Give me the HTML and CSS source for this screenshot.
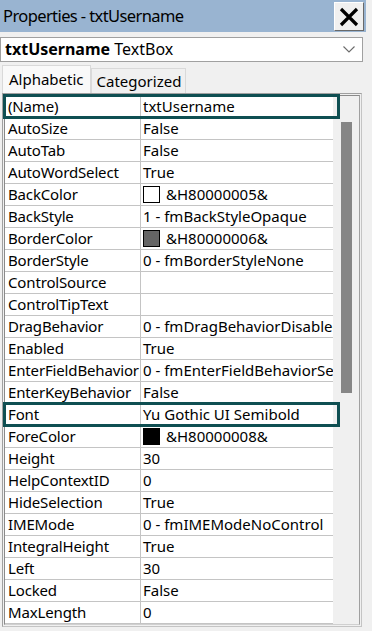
FILE: index.html
```html
<!DOCTYPE html>
<html>
<head>
<meta charset="utf-8">
<link rel="stylesheet" href="styles.css">
</head>
<body>
<div class="window">
  <div class="titlebar">
    <span class="title">Properties - txtUsername</span>
    <div class="close">
      <svg width="20" height="20" viewBox="0 0 20 20"><path d="M2 2 L18 18 M18 2 L2 18" stroke="#000" stroke-width="3.2" fill="none"/></svg>
    </div>
  </div>
  <div class="objsel">
    <span class="objname"><b>txtUsername</b> TextBox</span>
    <svg class="chev" width="12" height="7" viewBox="0 0 12 7"><path d="M0.5 0.5 L6 6 L11.5 0.5" stroke="#6b6b6b" stroke-width="1.1" fill="none"/></svg>
  </div>
  <div class="tabs">
    <div class="tab active">Alphabetic</div>
    <div class="tab">Categorized</div>
  </div>
  <div class="grid">
    <div class="grid-inner">
      <div class="rows">
        <div class="row"><div class="name">(Name)</div><div class="val">txtUsername</div><div class="hl"></div></div>
        <div class="row"><div class="name">AutoSize</div><div class="val">False</div></div>
        <div class="row"><div class="name">AutoTab</div><div class="val">False</div></div>
        <div class="row"><div class="name">AutoWordSelect</div><div class="val">True</div></div>
        <div class="row"><div class="name">BackColor</div><div class="val"><span class="sw sw-white"></span>&amp;H80000005&amp;</div></div>
        <div class="row"><div class="name">BackStyle</div><div class="val">1 - fmBackStyleOpaque</div></div>
        <div class="row"><div class="name">BorderColor</div><div class="val"><span class="sw sw-gray"></span>&amp;H80000006&amp;</div></div>
        <div class="row"><div class="name">BorderStyle</div><div class="val">0 - fmBorderStyleNone</div></div>
        <div class="row"><div class="name">ControlSource</div><div class="val"></div></div>
        <div class="row"><div class="name">ControlTipText</div><div class="val"></div></div>
        <div class="row"><div class="name">DragBehavior</div><div class="val">0 - fmDragBehaviorDisabled</div></div>
        <div class="row"><div class="name">Enabled</div><div class="val">True</div></div>
        <div class="row"><div class="name">EnterFieldBehavior</div><div class="val">0 - fmEnterFieldBehaviorSelectAll</div></div>
        <div class="row"><div class="name">EnterKeyBehavior</div><div class="val">False</div></div>
        <div class="row"><div class="name">Font</div><div class="val">Yu Gothic UI Semibold</div><div class="hl"></div></div>
        <div class="row"><div class="name">ForeColor</div><div class="val"><span class="sw sw-black"></span>&amp;H80000008&amp;</div></div>
        <div class="row"><div class="name">Height</div><div class="val">30</div></div>
        <div class="row"><div class="name">HelpContextID</div><div class="val">0</div></div>
        <div class="row"><div class="name">HideSelection</div><div class="val">True</div></div>
        <div class="row"><div class="name">IMEMode</div><div class="val">0 - fmIMEModeNoControl</div></div>
        <div class="row"><div class="name">IntegralHeight</div><div class="val">True</div></div>
        <div class="row"><div class="name">Left</div><div class="val">30</div></div>
        <div class="row"><div class="name">Locked</div><div class="val">False</div></div>
        <div class="row"><div class="name">MaxLength</div><div class="val">0</div></div>
      </div>
      <div class="scrollbar"><div class="thumb"></div></div>
    </div>
  </div>
</div>
</body>
</html>
```
FILE: styles.css
```css
html, body {
  margin: 0;
  padding: 0;
  background: #f0f0f0;
}
body {
  font-family: "Noto Sans", "Open Sans", sans-serif;
  color: #000;
  width: 372px;
  height: 631px;
  overflow: hidden;
}
.titlebar {
  height: 32px;
  margin-right: 6px;
  background: #99b4d1;
  display: flex;
  align-items: center;
  padding-left: 3px;
}
.title {
  font-size: 16.5px;
  letter-spacing: -0.6px;
  line-height: 32px;
}
.close {
  margin-left: auto;
  margin-right: 2px;
  width: 30px;
  height: 29px;
  box-sizing: border-box;
  background: #f0f0f0;
  border: 1px solid #ffffff;
  border-right-color: #696969;
  border-bottom-color: #696969;
  display: flex;
  align-items: center;
  justify-content: center;
  margin-top: 1px;
}
.objsel {
  margin-top: 5px;
  width: 363px;
  height: 25px;
  box-sizing: border-box;
  background: #fff;
  border: 1px solid #a0a0a0;
  display: flex;
  align-items: center;
  padding-left: 4px;
  padding-right: 7px;
}
.objname {
  font-size: 16px;
  line-height: 23px;
}
.chev {
  margin-left: auto;
}
.tabs {
  margin-top: 3px;
  height: 28px;
  display: flex;
  align-items: flex-end;
  padding-left: 2px;
}
.tab {
  box-sizing: border-box;
  font-size: 15px;
  border: 1px solid #d9d9d9;
  border-bottom: none;
  padding: 0 4px 0 5px;
  height: 25px;
  line-height: 24px;
  background: #f0f0f0;
}
.tab.active {
  height: 28px;
  background: #f9f9f9;
  line-height: 26px;
  padding: 0 6px 2px 6px;
}
.grid {
  margin-left: 2px;
  width: 360px;
  box-sizing: border-box;
  border: 1px solid #a0a0a0;
  border-right-color: #c4c4c4;
  border-bottom-color: #c4c4c4;
  padding: 1px;
}
.grid-inner {
  border: 1px solid #8a8a8a;
  border-right-color: #a0a0a0;
  border-bottom-color: #d0d0d0;
  display: flex;
}
.rows {
  width: 328px;
  background: #fff;
}
.row {
  position: relative;
  height: 22px;
  box-sizing: border-box;
  border-bottom: 1px solid #c4c4c4;
  display: flex;
  font-size: 15px;
  line-height: 21px;
}
.name {
  width: 136px;
  box-sizing: border-box;
  padding-left: 3px;
  border-right: 1px solid #c4c4c4;
  white-space: nowrap;
  overflow: hidden;
  letter-spacing: -0.15px;
}
.val {
  flex: 1;
  padding-left: 2px;
  white-space: nowrap;
  overflow: hidden;
  display: flex;
  align-items: center;
}
.sw {
  display: inline-block;
  width: 17px;
  height: 17px;
  box-sizing: border-box;
  border: 1px solid #000;
  margin-right: 6px;
  flex: none;
}
.sw-white { background: #fff; }
.sw-gray { background: #646464; }
.sw-black { background: #000; }
.hl {
  position: absolute;
  left: -2px;
  top: -2px;
  width: 337px;
  height: 25px;
  box-sizing: border-box;
  border: 3px solid #0f4f52;
  z-index: 2;
}
.scrollbar {
  width: 24px;
  background: #f0f0f0;
  padding-top: 26px;
  padding-left: 8px;
  box-sizing: border-box;
}
.thumb {
  width: 11px;
  height: 271px;
  background: #868686;
}
```
